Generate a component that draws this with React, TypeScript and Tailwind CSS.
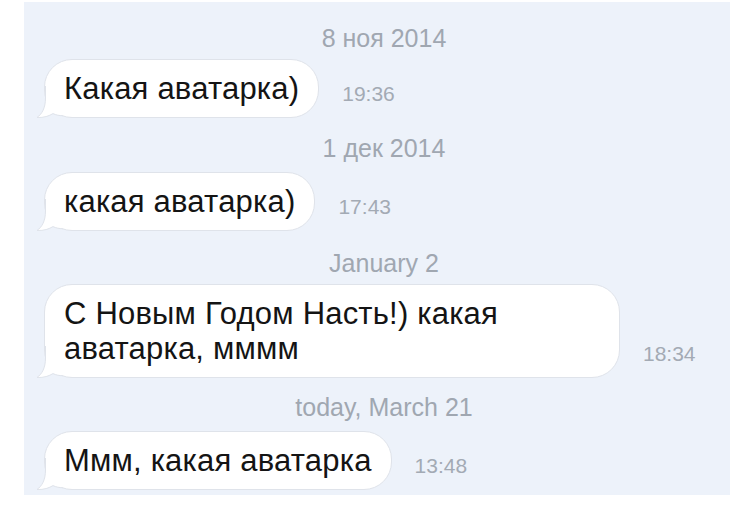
import type { ReactNode } from 'react';

const font = { fontFamily: '"Liberation Sans", Arial, sans-serif' };

function Tail() {
  return (
    <svg
      className="absolute left-[-9px] bottom-[-1px]"
      width="27"
      height="32"
      viewBox="0 0 27 32"
    >
      <path
        d="M9.5 0 L9.5 12 C9.5 22 6 28 1 31.5 C8 31.8 13 30 17 27.6 C20 29 23 29.7 27 29.7 L27 0 Z"
        fill="#ffffff"
      />
      <path
        d="M9.5 0 L9.5 12 C9.5 22 6 28 1 31.5 C8 31.8 13 30 17 27.6 C20 29 23 29.7 27 29.7"
        fill="none"
        stroke="#dfe3ea"
        strokeWidth="1"
      />
    </svg>
  );
}

function DateLabel({ children, className }: { children: ReactNode; className: string }) {
  return (
    <div className={`pl-[14px] text-center text-[25px] leading-[30px] text-[#a0a7b1] ${className}`}>
      {children}
    </div>
  );
}

function Message({ text, time, className }: { text: ReactNode; time: string; className: string }) {
  return (
    <div className={`flex items-end pl-[20px] ${className}`}>
      <div className="relative max-w-[576px] rounded-[28px] border border-[#dfe3ea] bg-white px-[19px] py-[11px] text-[31px] leading-[35px] tracking-[0.2px] text-[#141414]">
        <Tail />
        <span className="relative">{text}</span>
      </div>
      <div className="ml-[23px] mb-[12px] shrink-0 text-[21px] leading-[24px] text-[#a3aab4]">
        {time}
      </div>
    </div>
  );
}

export default function App() {
  return (
    <div className="h-[507px] w-[750px] overflow-hidden bg-white" style={font}>
      <div className="ml-[24px] mt-[2px] flex h-[493px] w-[706px] flex-col bg-[#edf2fa]">
        <DateLabel className="mt-[21px]">8 ноя 2014</DateLabel>
        <Message className="mt-[6px]" text="Какая аватарка)" time="19:36" />
        <DateLabel className="mt-[15px]">1 дек 2014</DateLabel>
        <Message className="mt-[9px]" text="какая аватарка)" time="17:43" />
        <DateLabel className="mt-[17px]">January 2</DateLabel>
        <Message className="mt-[6px]" text="С Новым Годом Насть!) какая аватарка, мммм" time="18:34" />
        <DateLabel className="mt-[14px]">today, March 21</DateLabel>
        <Message className="mt-[9px]" text="Ммм, какая аватарка" time="13:48" />
      </div>
    </div>
  );
}
